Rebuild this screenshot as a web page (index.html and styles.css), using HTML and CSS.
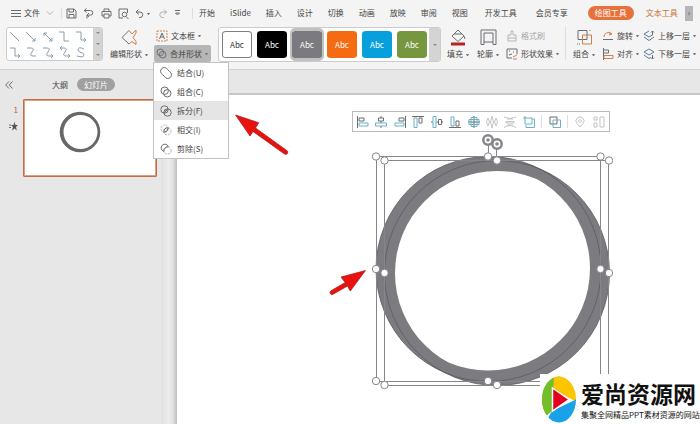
FILE: index.html
```html
<!DOCTYPE html>
<html lang="zh-CN">
<head>
<meta charset="utf-8">
<title>演示文稿</title>
<link rel="stylesheet" href="styles.css">
</head>
<body>
<header class="topbar">
  <button class="file-button"><svg width="10" height="9" viewBox="0 0 10 9"><path d="M0 1.500h10M0 4.500h10M0 7.500h10"/></svg>文件<svg class="faint" width="8" height="6" viewBox="0 0 8 6"><path d="M1 1.500l3 3 3-3"/></svg></button>
  <div class="quick-access">
    <button aria-label="保存"><svg width="11" height="11" viewBox="0 0 11 11"><path d="M1 1h7l2 2v7H1zM3 1v3h4.500V1M3 10V6.500h5V10"/></svg></button>
    <button aria-label="输出"><svg width="11" height="11" viewBox="0 0 11 11"><path d="M1 2.500h6.500a2.300 2.300 0 010 4.600H4M3.500.500L1.200 2.500l2.300 2M6 5L4 7.100 6 9M4 7v3.500"/></svg></button>
    <button aria-label="打印"><svg width="11" height="11" viewBox="0 0 11 11"><path d="M3 3.500V1h5v2.500M3 8H1V3.500h9V8H8M3 6h5v4H3z"/></svg></button>
    <button aria-label="打印预览"><svg width="11" height="11" viewBox="0 0 11 11"><path d="M5 10H1V1h8.500v4M8 8.500L10.500 11"/><circle cx="6.500" cy="6.500" r="2.300"/></svg></button>
    <button aria-label="撤销"><svg width="15" height="11" viewBox="0 0 15 11"><path d="M3.500 1.500L1 4l3 2.500M1 4h4a2.500 2.500 0 010 5.500H4"/><path class="solid" d="M12 5h3l-1.500 2z"/></svg></button>
    <button aria-label="恢复" class="faint"><svg width="11" height="11" viewBox="0 0 11 11"><path d="M7 1.500L9.500 4 7 6.500M9.500 4h-4a2.500 2.500 0 000 5.500H7"/></svg></button>
    <button aria-label="更多"><svg width="7" height="8" viewBox="0 0 7 8"><path d="M1 1.500h5M1.500 4l2 2 2-2z"/></svg></button>
  </div>
  <nav class="tabs">
    <a href="#">开始</a><a href="#">iSlide</a><a href="#">插入</a><a href="#">设计</a><a href="#">切换</a><a href="#">动画</a><a href="#">放映</a><a href="#">审阅</a><a href="#">视图</a><a href="#" class="wide">开发工具</a><a href="#" class="wide">会员专享</a>
  </nav>
  <a href="#" class="tool-tab current">绘图工具</a>
  <a href="#" class="tool-tab">文本工具</a>
  <button class="tab-next" aria-label="下一组">›</button>
</header>

<section class="ribbon">
  <div class="shape-gallery">
    <svg width="86" height="33" viewBox="0 0 86 33">
      <g class="connector"><path d="M3 4l9 9M19 4l9 9m-3 0h3v-3M37 5l8 8m-3 0h3v-3m-8-2V5h3M52 4h5v9h5M69 4h5v8h5m-2-2l2 2-2 2"/>
      <path d="M3 20h5v8h5m-2-2l2 2-2 2M20 20h4q4 0 1 4t1 4h3M36 20h4q4 0 1 4t1 4h4m-2-2l2 2-2 2M55 18l-2 2 2 2m-2-2h4q4 0 1 4t1 4h4m-2-2l2 2-2 2M77 21q-6-3-6 1 0 2 3 2.500t3 2.500q0 3-7 1"/></g>
    </svg>
    <div class="scroller"><i></i><i></i><i></i></div>
  </div>
  <button class="big edit-shape"><svg width="18" height="17" viewBox="0 0 18 17"><path class="brown" d="M9 1.500L12 5l4-4v3l-3 4.500 3 4v3l-4-3-3 2.500"/><path d="M9 1.500L2 8.500l7 6.500"/></svg><span>编辑形状<b></b></span></button>
  <div class="pair text-merge">
    <button><svg width="12" height="12" viewBox="0 0 12 12"><path class="brown" d="M1 1h10v10H1z" stroke-dasharray="2 1"/><path d="M3.500 9L6 3l2.500 6M4.500 7h3"/></svg>文本框<b></b></button>
    <div class="merge-wrap">
      <button class="merge"><svg width="11" height="11" viewBox="0 0 11 11"><circle cx="4.300" cy="4.300" r="3.300"/><circle cx="6.700" cy="6.700" r="3.300"/></svg>合并形状<b></b></button>
      <div class="menu">
        <button><svg width="12" height="12" viewBox="0 0 12 12"><path d="M7.500 2.500a3.700 3.700 0 10-5 5L4.500 9.500a3.700 3.700 0 105-5z"/></svg>结合(U)</button>
        <button><svg width="12" height="12" viewBox="0 0 12 12"><circle cx="4.700" cy="4.700" r="3.700"/><circle cx="7.300" cy="7.300" r="3.700"/></svg>组合(C)</button>
        <button class="hover"><svg width="12" height="12" viewBox="0 0 12 12"><circle cx="4.500" cy="4.500" r="3.700"/><circle cx="7.500" cy="7.500" r="3.700"/><path d="M4 8l4-4M4.500 6L6 4.500M6 8l2-2"/></svg>拆分(F)</button>
        <button><svg width="12" height="12" viewBox="0 0 12 12"><g class="faint" stroke-dasharray="2 1"><circle cx="4.700" cy="4.700" r="3.700"/><circle cx="7.300" cy="7.300" r="3.700"/></g><path d="M8.200 3.800Q4 3.500 3.800 8.200 8 8 8.200 3.800z"/></svg>相交(I)</button>
        <button><svg width="12" height="12" viewBox="0 0 12 12"><circle class="faint" cx="7.500" cy="7.500" r="3.700" stroke-dasharray="2 1"/><path d="M8.400 3.800a3.700 3.700 0 10-4.600 4.600Q4 4 8.400 3.800z"/></svg>剪除(S)</button>
      </div>
    </div>
  </div>
  <div class="style-gallery">
    <div class="swatches">
      <button class="white">Abc</button><button class="black">Abc</button><button class="gray">Abc</button><button class="orange">Abc</button><button class="blue">Abc</button><button class="green">Abc</button>
    </div>
    <div class="scroller"><i></i></div>
  </div>
  <button class="big fill"><svg width="17" height="17" viewBox="0 0 17 17"><path d="M8 1L2 7l6 5.500L14 7zM4 5h8M14 7l1 3"/><path d="M1 15h14" stroke="#b3261e" stroke-width="3"/></svg><span>填充<b></b></span></button>
  <button class="big outline"><svg width="17" height="17" viewBox="0 0 17 17"><path d="M1 15.500V1h15v14.500h-3V4H4v11.500zM4 13h9"/></svg><span>轮廓<b></b></span></button>
  <div class="pair effects">
    <button class="disabled"><svg width="12" height="12" viewBox="0 0 12 12"><path d="M5 1h2v4h3v3H2V5h3zM2 8v3h8V8"/></svg>格式刷</button>
    <button><svg width="12" height="12" viewBox="0 0 12 12"><path d="M6 10H1V1h10v5M3 3h1M7 4h1M3 7l3-1"/><path class="brown" d="M7 9l4-2M7 11h4"/></svg>形状效果<b></b></button>
  </div>
  <button class="big group"><svg width="17" height="17" viewBox="0 0 17 17"><path d="M2 1.500h9v9H2z"/><path class="brown" d="M6.500 6h9v9h-9z"/><path d="M14 1v2M1 15h3" stroke-dasharray="1 1"/></svg><span>组合<b></b></span></button>
  <div class="pair rotate">
    <button><svg width="12" height="12" viewBox="0 0 12 12"><path class="brown" d="M2 7a4 4 0 017-3M7 2l3 2-3 1"/><path d="M1 9.500h10"/></svg>旋转<b></b></button>
    <button><svg width="12" height="12" viewBox="0 0 12 12"><path d="M1.500 0v12M1.500 2h5v3h-5"/><path class="brown" d="M2 7.500h9v3H2z"/></svg>对齐<b></b></button>
  </div>
  <div class="pair layers">
    <button><svg width="12" height="12" viewBox="0 0 12 12"><path class="navy" d="M6 1L1 4l5 3 4-2.500M1 7l5 3.500L11 7"/><path d="M9.500 5V1M8 2.500L9.500 1 11 2.500"/></svg>上移一层<b></b></button>
    <button><svg width="12" height="12" viewBox="0 0 12 12"><path class="navy" d="M6 1L1 4l5 3 5-3zM1 7l5 3.500 2-1"/><path d="M9.500 7v4M8 9.500L9.500 11 11 9.500"/></svg>下移一层<b></b></button>
  </div>
</section>

<main class="workspace">
  <aside class="panel">
    <div class="panel-head"><button class="collapse" aria-label="收起"><svg width="8" height="8" viewBox="0 0 8 8"><path d="M4 .500L.700 4 4 7.500M7.500.500L4.200 4l3.300 3.500"/></svg></button><button>大纲</button><button class="active">幻灯片</button></div>
    <div class="slide-row">
      <div class="slide-meta"><span>1</span><svg width="9" height="9" viewBox="0 0 9 9"><path class="solid" d="M5.500 0l1 3H9L7 5l.800 3.500-2.300-2-2.500 2L4 5 2 3h2.500z"/><path d="M0 3h2M0 5.500h2"/></svg></div>
      <div class="thumb"><svg width="42" height="42" viewBox="0 0 42 42"><path fill="#68686a" stroke="none" fill-rule="evenodd" d="M21 .700a20.300 20.300 0 100 40.600 20.300 20.300 0 100-40.600zM21.500 4a17 17 0 110 34 17 17 0 110-34z"/></svg></div>
    </div>
  </aside>
  <div class="splitter"></div>
  <section class="stage">
    <div class="align-bar">
      <button aria-label="左对齐"><svg viewBox="0 0 12 12"><path d="M.500 0v12M2 2h5v3H2z"/><path class="teal" d="M2 7h9v3H2z"/></svg></button>
      <button aria-label="水平居中"><svg viewBox="0 0 12 12"><path d="M3.500 2h5v3h-5zM6 0v2M6 5v2M6 10v2"/><path class="teal" d="M.500 7h11v3H.500z"/></svg></button>
      <button aria-label="右对齐"><svg viewBox="0 0 12 12"><path d="M11.500 0v12M5 2h5v3H5z"/><path class="teal" d="M1 7h9v3H1z"/></svg></button>
      <button aria-label="顶端对齐"><svg viewBox="0 0 12 12"><path d="M0 .500h12M7 2h3v5H7z"/><path class="teal" d="M2 2h3v9.500H2z"/></svg></button>
      <button aria-label="垂直居中"><svg viewBox="0 0 12 12"><path d="M7.500 3.500h3v5h-3zM0 6h2M5 6h2M11 6h1"/><path class="teal" d="M2 .500h3v11H2z"/></svg></button>
      <button aria-label="底端对齐"><svg viewBox="0 0 12 12"><path d="M0 11.500h12M7 5h3v5H7z"/><path class="teal" d="M2 1h3v9H2z"/></svg></button>
      <button aria-label="中心对齐"><svg viewBox="0 0 12 12"><path d="M6 0v12M0 6h12"/><path class="teal" d="M3 1.500h6v9H3zM1 3.500h10v5H1z"/></svg></button>
      <button aria-label="横向分布" class="pale"><svg viewBox="0 0 12 12"><path d="M2 2l1.500 4L2 10 .500 6zM6 0l1.500 6L6 12 4.500 6zM10 2l1.500 4-1.500 4L8.500 6z"/></svg></button>
      <button aria-label="纵向分布" class="pale"><svg viewBox="0 0 12 12"><path d="M0 1q6 3 12 0M3 3h6M2 5.500h8v1.500H2zM0 11.500q6-4 12 0M3 9h6"/></svg></button>
      <button aria-label="等尺寸"><svg viewBox="0 0 12 12"><path class="teal" d="M0 2h2V0M2 2h7v6H2zM9 3h2.500v8.500H3V9"/></svg></button>
      <hr>
      <button aria-label="组合"><svg viewBox="0 0 12 12"><path d="M1 1h7v7H1z"/><path class="teal" d="M4 4h7.500v7.500H4z"/></svg></button>
      <hr>
      <button aria-label="定位" class="pale"><svg viewBox="0 0 12 12"><path d="M6 11L3 7.500a4 4 0 116 0zM4.500 5L6 3.500 7.500 5 6 6.500z"/></svg></button>
      <button aria-label="版式" class="pale"><svg viewBox="0 0 12 12"><path d="M1 1h3v3H1zM1 7h3v4H1zM7 1h4v10H7z"/></svg></button>
    </div>
    <svg class="drawing" width="523" height="329" viewBox="177 95 523 329">
      <defs><clipPath id="left-hole"><circle cx="488" cy="268.500" r="102"/></clipPath></defs>
      <g fill="#7b7b80">
        <circle cx="488.500" cy="269" r="112.500"/><circle cx="497" cy="273" r="112.500"/>
      </g>
      <circle cx="497" cy="273" r="102" fill="#fff" clip-path="url(#left-hole)"/>
      <g fill="none" stroke="#5b5b63" stroke-width=".8">
        <circle cx="488.500" cy="269" r="112.500"/><circle cx="497" cy="273" r="112.500"/>
      </g>
      <g fill="none" stroke="#85858a" stroke-width="1">
        <path d="M376.500 156.500h224v225h-224zM384.500 160.500h224v225h-224zM488.500 145v11M496.500 149v11"/>
      </g>
      <g fill="#fff" stroke="#85858a">
        <g stroke-width="2.500"><circle cx="488" cy="140" r="4.700"/><circle cx="497" cy="144" r="4.700"/></g>
        <circle cx="376" cy="156.500" r="3.700"/><circle cx="488" cy="156.500" r="3.700"/><circle cx="600.500" cy="156.500" r="3.700"/>
        <circle cx="376" cy="269" r="3.700"/><circle cx="600.500" cy="269" r="3.700"/><circle cx="376" cy="381" r="3.700"/><circle cx="488" cy="381" r="3.700"/>
        <circle cx="384.500" cy="160.500" r="3.700"/><circle cx="497" cy="160.500" r="3.700"/><circle cx="609" cy="160.500" r="3.700"/>
        <circle cx="384.500" cy="273" r="3.700"/><circle cx="609" cy="273" r="3.700"/><circle cx="384.500" cy="385" r="3.700"/><circle cx="497" cy="385" r="3.700"/>
      </g>
      <g fill="#85858a"><circle cx="488" cy="140" r="1.800"/><circle cx="497" cy="144" r="1.800"/></g>
      <g fill="#e8130f" stroke="#a81414" stroke-width=".7" stroke-linejoin="round">
        <path d="M235.500 115l23.200 7.700-3.200 5.300 31.300 22.500a2 2 0 01-2.300 3.500l-31.500-22.500-3 4.500z"/>
        <path d="M365.500 270.500l-24.500 6.500 4.200 5.500-14.200 8.300a2 2 0 002 3.500l14.500-8.300 2.800 5z"/>
      </g>
    </svg>
    <div class="brand">
      <svg width="36" height="47" viewBox="0 0 36 47"><defs><clipPath id="disc"><ellipse cx="18" cy="23.500" rx="17" ry="23"/></clipPath></defs>
        <g clip-path="url(#disc)"><path fill="#74bd2b" d="M0 0h20L11 13v22L0 42z"/><path fill="#fdc400" d="M12 0h24v26L11 13z"/><path fill="#1ba1e8" d="M36 23L11 35 4 47h32z"/><path fill="#74bd2b" d="M0 0h13l-2 35-8 7-3 0z"/></g>
        <path fill="#e60020" stroke="#fff" stroke-width="1.500" d="M11.500 12L28 23.500 11.500 35z"/></svg>
      <div><strong>爱尚资源网</strong><small>集聚全网精品PPT素材资源的网站</small></div>
    </div>
  </section>
</main>
</body>
</html>
```

FILE: styles.css
```css
* { box-sizing: border-box; }
body {
  margin: 0;
  min-height: 100vh;
  display: flex;
  flex-direction: column;
  overflow: hidden;
  background: #e7e7e7;
  color: #444;
  font: 8px/12px "Noto Sans CJK SC", "Noto Sans", sans-serif;
}
button {
  display: flex;
  align-items: center;
  flex: none;
  border: 0;
  padding: 0;
  background: none;
  color: inherit;
  font: inherit;
  white-space: nowrap;
}
a { color: inherit; text-decoration: none; white-space: nowrap; }
svg { display: block; flex: none; fill: none; stroke: #6a6d71; stroke-width: 1; }
b {
  display: inline-block;
  margin-left: 4px;
  border: 1px solid transparent;
  border-top: 2px solid #777;
  border-bottom: 0;
  width: 3px;
  vertical-align: middle;
}
.solid { fill: #555; stroke: none; }
.faint { opacity: .5; }
.pale { opacity: .4; }
.brown { stroke: #c9814e; }
.navy { stroke: #5c7a9e; }
.teal { stroke: #6bb0c6; }

.topbar { display: flex; align-items: center; height: 26px; padding-left: 11px; background: #f4f4f4; }
.file-button { gap: 3px; width: 50px; }
.file-button .faint { margin-left: 3px; }
.quick-access {
  display: flex;
  align-items: center;
  justify-content: space-between;
  width: 132px;
  padding: 0 11px 0 4px;
  border: 1px solid #ddd;
  border-width: 0 1px;
}
.tabs { display: flex; gap: 15px; padding-left: 6px; margin-right: 18px; }
.tabs .wide { padding: 0 2px; }
.tool-tab { padding: 1px 7px; border-radius: 7px; color: #c87331; }
.tool-tab.current { margin-right: 5px; background: #e8703a; color: #fff; }
.tab-next { justify-content: center; width: 8px; height: 15px; background: #b5b5ba; }

.ribbon {
  display: flex;
  align-items: flex-start;
  height: 44px;
  padding: 1px 0 0 6px;
  background: #f4f4f4;
  border-bottom: 1px solid #d2d2d2;
}
.shape-gallery, .style-gallery { display: flex; flex: none; border: 1px solid #ccc; border-radius: 3px; background: #fff; overflow: hidden; }
.shape-gallery { width: 97px; height: 34px; }
.connector { stroke: #8c9dab; }
.scroller { display: flex; flex: 1; flex-direction: column; align-items: center; justify-content: space-around; background: #d4d4d4; }
.scroller i { border: 2px solid transparent; border-top-color: #888; border-bottom: 0; }
.big { flex-direction: column; gap: 2px; padding-top: 2px; line-height: 12px; }
.big b { margin-left: 3px; }
.edit-shape { width: 38px; margin-left: 7px; }
.pair { display: flex; flex-direction: column; flex: none; }
.pair button { gap: 3px; height: 17px; }
.pair b { margin-left: 0; }
.pair > * + button { margin-top: 1px; }
.text-merge { width: 57px; margin-left: 6px; }
.text-merge > button { padding-left: 2px; }
.merge-wrap { position: relative; margin-top: 1px; }
.pair .merge { width: 100%; padding-left: 2px; border-radius: 2px; background: #b6b6b6; }
.menu {
  position: absolute;
  z-index: 2;
  top: 17px;
  left: -1px;
  width: 76px;
  border: 1px solid #c3c3c3;
  background: #fff;
}
.pair .menu button { width: 100%; height: 19px; gap: 5px; padding-left: 6px; }
.menu .hover { background: #e5e5e5; }

.style-gallery { width: 223px; height: 35px; margin-left: 7px; }
.swatches { display: flex; gap: 1px; padding-left: 1px; }
.swatches button {
  justify-content: center;
  width: 34px;
  height: 33px;
  border: 3px solid transparent;
  border-width: 3px 2px;
  border-radius: 6px;
  background-clip: padding-box;
  color: #fff;
}
.swatches .white { color: #333; box-shadow: inset 0 0 0 1px #7b8087; }
.swatches .black { background-color: #000; }
.swatches .gray { border-color: #c1c1c1; border-radius: 5px; background-color: #7a7a80; }
.swatches .orange { background-color: #f56b12; }
.swatches .blue { background-color: #08a0dc; }
.swatches .green { background-color: #76963f; }
.fill { width: 24px; margin-left: 5px; }
.outline { width: 24px; margin-left: 6px; }
.effects { width: 58px; margin-left: 6px; }
.effects .disabled { opacity: .45; }
.group { width: 32px; margin-left: 1px; padding-left: 5px; border-left: 1px solid #ddd; }
.rotate { width: 37px; margin-left: 5px; }
.layers { width: 54px; margin-left: 4px; }

.workspace { display: flex; flex: 1; }
.panel { flex: none; width: 161px; }
.panel-head { display: flex; align-items: center; height: 29px; padding-left: 5px; }
.collapse { margin-right: 39px; }
.active { margin-left: 9px; height: 13px; padding: 0 7px; border-radius: 7px; background: #a0a0a0; color: #fff; }
.slide-row { display: flex; }
.slide-meta { display: flex; flex-direction: column; align-items: flex-end; gap: 6px; width: 23px; padding: 5px 5px 0 0; color: #c15b31; }
.thumb { width: 134px; height: 78px; padding: 11px 0 0 35px; border: 1px solid #c56c45; border-radius: 1px; outline: 1px solid #d9a084; outline-offset: -2px; background: #fff; }
.splitter { flex: none; width: 16px; margin-top: 25px; background: linear-gradient(90deg, #e2e2e2, #ededed 50%, #e0e0e0 75%, #bdbdbd); }
.stage { position: relative; flex: 1; margin-top: 23px; border-top: 2px solid #c6c6c6; background: #fff; }
.align-bar {
  display: flex;
  align-items: center;
  justify-content: space-between;
  width: 258px;
  height: 21px;
  margin: 16px 0 0 175px;
  padding: 0 4px;
  border: 1px solid #bbb;
  background: #fff;
}
.align-bar svg { width: 12px; height: 12px; }
.align-bar hr { width: 1px; height: 13px; margin: 0; border: 0; background: #ddd; }
.drawing { position: absolute; top: 0; left: 0; stroke: none; }
.brand {
  position: absolute;
  right: 0;
  bottom: 0;
  display: flex;
  align-items: center;
  gap: 4px;
  width: 160px;
  height: 50px;
  padding-left: 1px;
  background: #fff;
  color: #111;
  white-space: nowrap;
}
.brand svg { stroke: none; }
.brand strong { display: block; font-size: 23px; line-height: 32px; }
.brand small { display: block; font-size: 8px; line-height: 12px; }
```
